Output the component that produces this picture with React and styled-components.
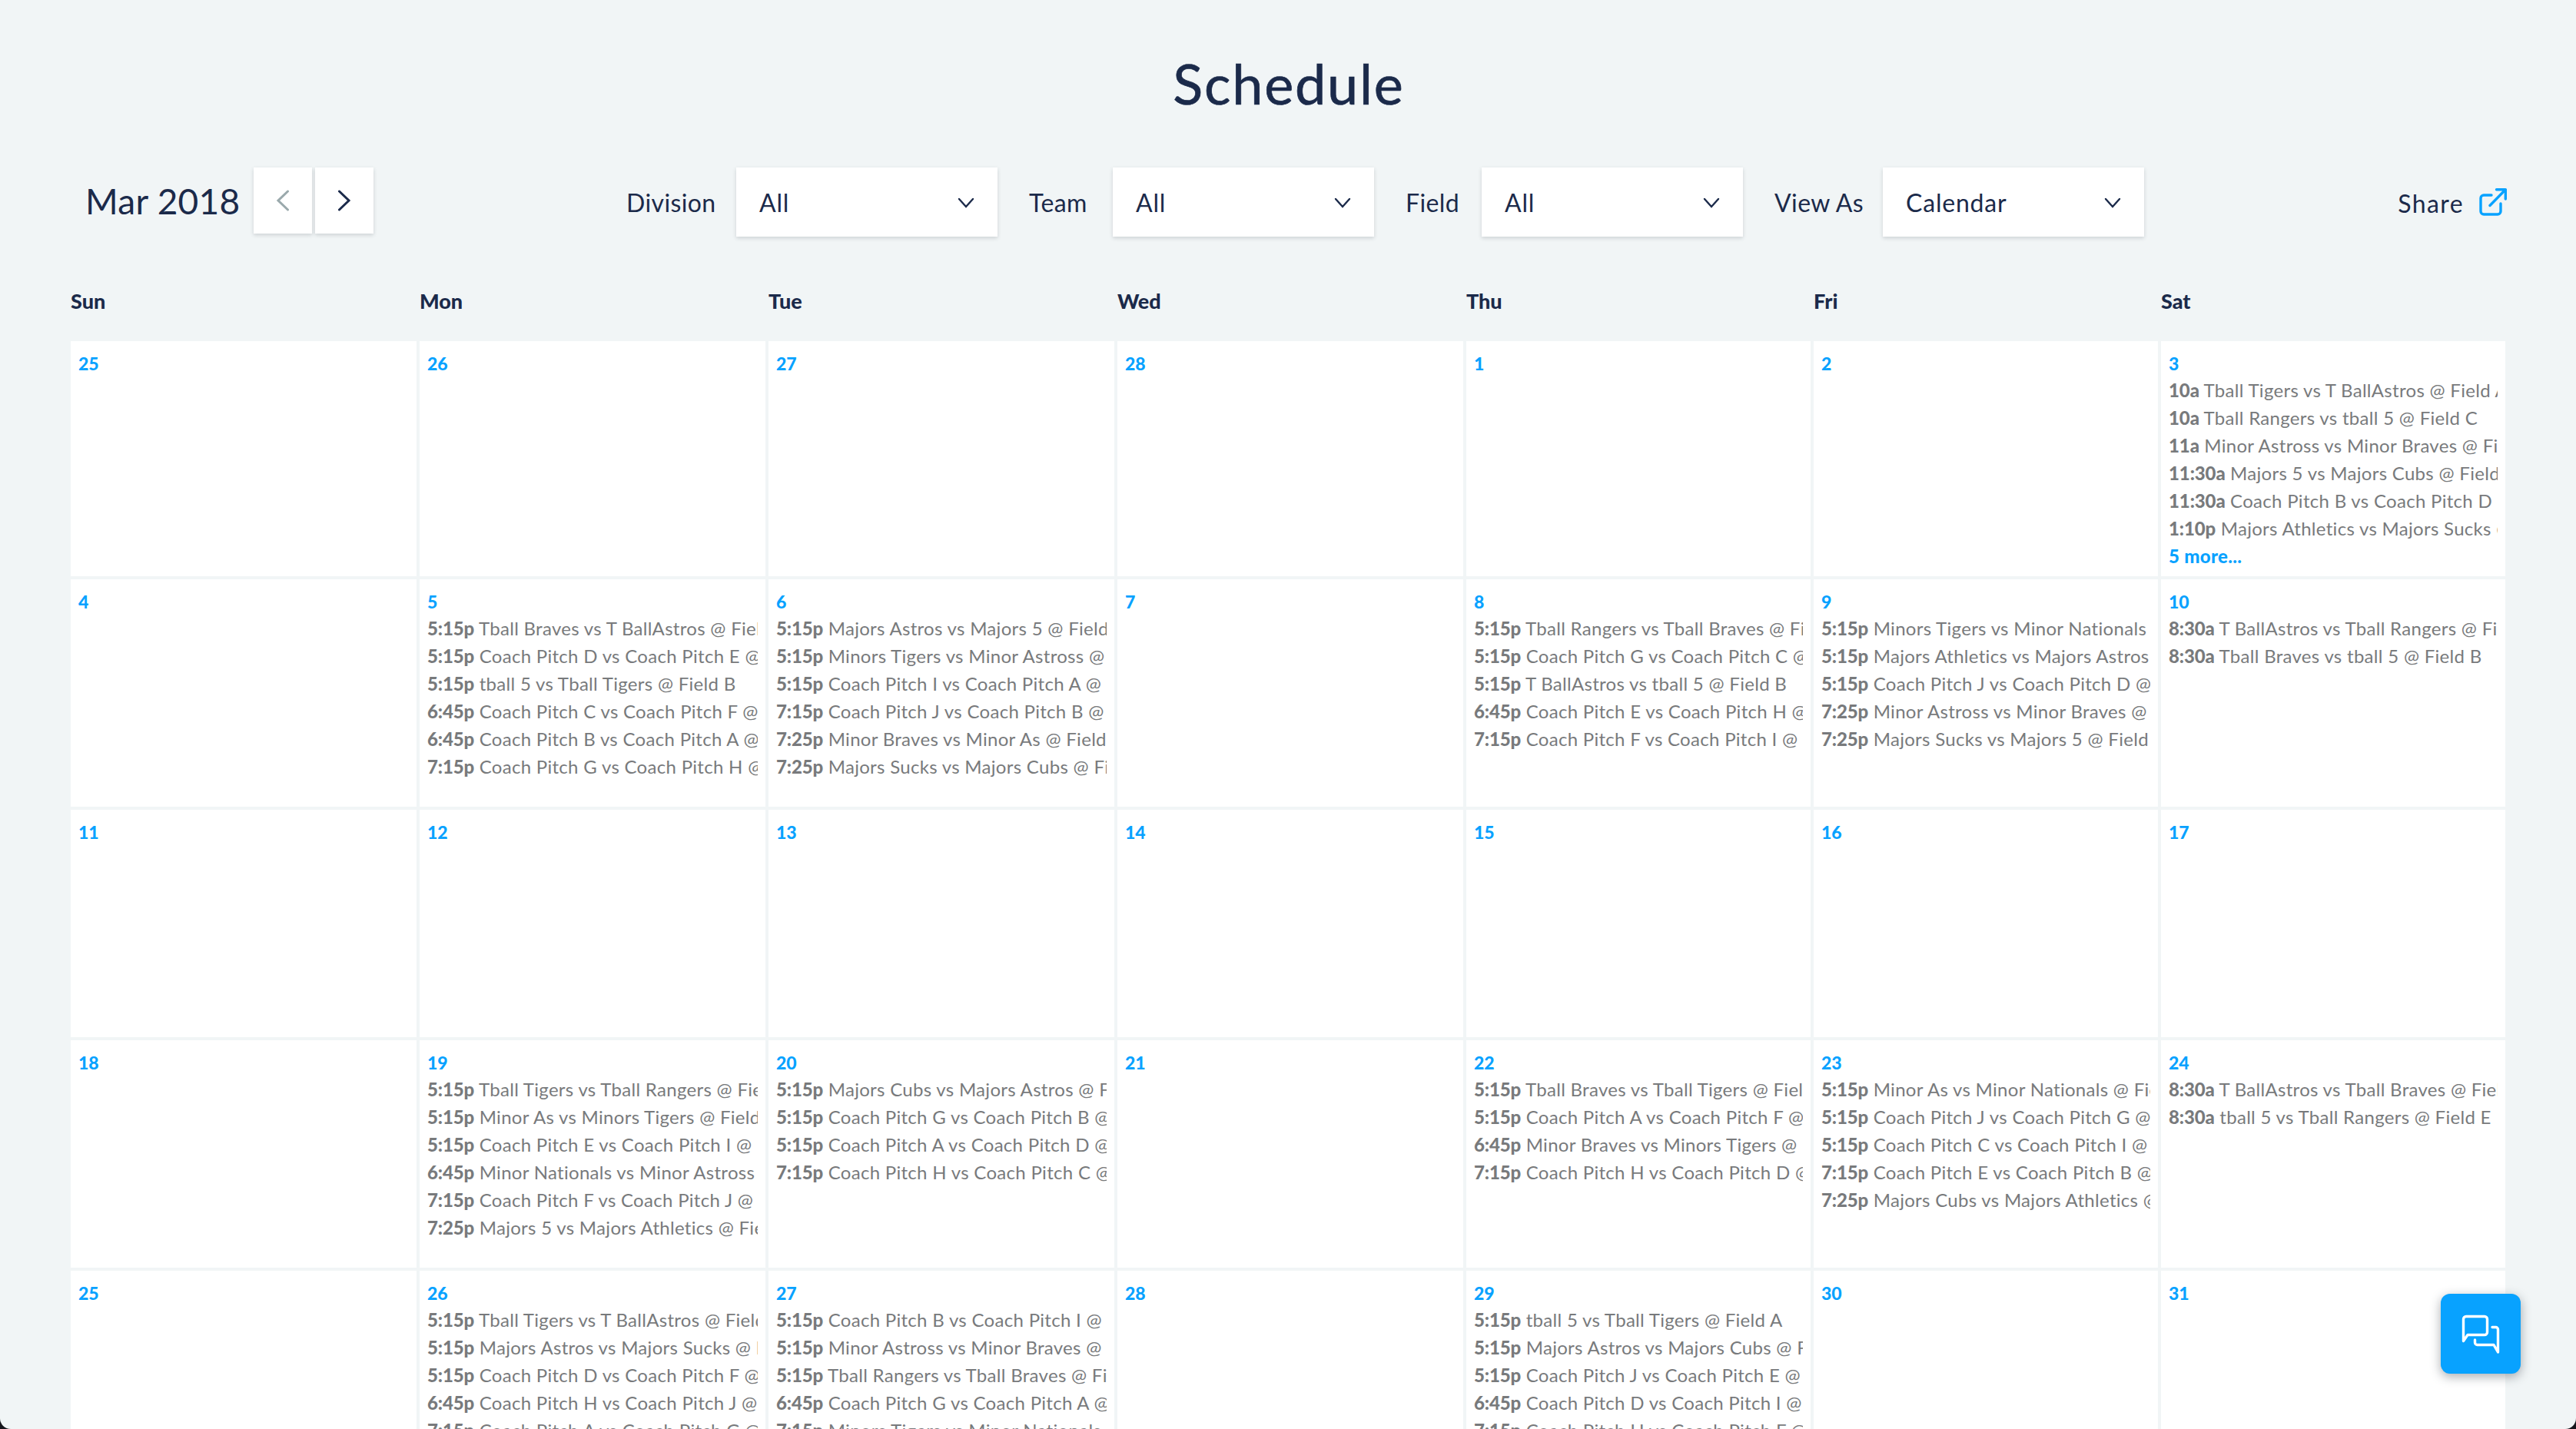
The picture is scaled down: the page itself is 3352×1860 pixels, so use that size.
import React from 'react'
import styled, { createGlobalStyle } from 'styled-components'

const navy = '#1b2a4a'
const blue = '#08a2ff'
const FONT = `Lato, "Open Sans", sans-serif`

const GlobalStyle = createGlobalStyle`
  html, body {
    margin: 0;
    background: #16161c;
  }
  * {
    box-sizing: border-box;
  }
`

const Page = styled.div`
  position: relative;
  height: 1860px;
  overflow: hidden;
  padding: 0 90px 0 92px;
  background: #f1f5f6;
  border-radius: 0 0 14px 14px;
  font-family: ${FONT};
  color: ${navy};
`

const Title = styled.h1`
  margin: 0;
  height: 218px;
  line-height: 217px;
  text-align: center;
  font-size: 72px;
  font-weight: 400;
  letter-spacing: 1.8px;
  -webkit-text-stroke: 0.7px ${navy};
`

const Toolbar = styled.div`
  display: flex;
  align-items: center;
  height: 90px;
`

const Month = styled.div`
  margin-left: 19px;
  margin-bottom: 3px;
  width: 198px;
  font-size: 46px;
  letter-spacing: 0.3px;
  white-space: nowrap;
`

const NavGroup = styled.div`
  display: flex;
  gap: 4px;
  align-self: flex-start;
  margin-left: 21px;
`

const NavButton = styled.button`
  display: flex;
  align-items: center;
  justify-content: center;
  width: 76px;
  height: 86px;
  padding: 0;
  border: 0;
  background: #fff;
  box-shadow: 0 2px 5px rgba(40, 50, 60, 0.18);
`

const Filters = styled.div`
  display: flex;
  align-items: center;
  margin-left: 329px;
`

const FilterLabel = styled.span`
  width: ${props => props.$width}px;
  margin-right: 31px;
  font-size: 32px;
  letter-spacing: 0.4px;
  white-space: nowrap;
`

const Select = styled.div`
  display: flex;
  align-items: center;
  justify-content: space-between;
  width: 340px;
  height: 90px;
  margin-right: 41px;
  padding: 1px 30px 0;
  background: #fff;
  box-shadow: 0 2px 5px rgba(40, 50, 60, 0.18);
  font-size: 32px;
  letter-spacing: 0.8px;
`

const Share = styled.a`
  display: flex;
  align-items: center;
  gap: 20px;
  margin-left: auto;
  font-size: 32px;
  letter-spacing: 1.4px;

  span {
    padding-top: 3px;
  }
`

const WeekHeader = styled.div`
  display: grid;
  grid-template-columns: 450px 450px 450px 450px 448px 448px 448px;
  column-gap: 4px;
  height: 136px;
  padding-top: 66px;
`

const WeekDay = styled.div`
  font-size: 27px;
  line-height: 36px;
  font-weight: 900;
`

const Calendar = styled.div`
  display: grid;
  grid-template-columns: 450px 450px 450px 450px 448px 448px 448px;
  grid-template-rows: 306px 296px 296px 296px 296px;
  gap: 4px;
`

const Cell = styled.div`
  min-width: 0;
  padding: 11px 10px 0;
  background: #fff;
  overflow: hidden;
`

const DayNumber = styled.div`
  height: 35px;
  font-size: 23px;
  line-height: 36px;
  font-weight: 900;
  color: ${blue};
`

const Event = styled.div`
  height: 36px;
  font-size: 24px;
  line-height: 36px;
  letter-spacing: 0.3px;
  white-space: nowrap;
  overflow: hidden;
  color: #787a7c;

  b {
    font-weight: 900;
    letter-spacing: -0.1px;
  }
`

const More = styled.div`
  font-size: 24px;
  line-height: 36px;
  letter-spacing: 0.3px;
  font-weight: 900;
  color: ${blue};
`

const ChatButton = styled.button`
  position: absolute;
  left: 3176px;
  top: 1684px;
  width: 104px;
  height: 104px;
  padding: 0;
  border: 0;
  border-radius: 12px;
  background: ${blue};
  box-shadow: 0 4px 14px rgba(40, 50, 60, 0.4);
`

const Chevron = ({ dir = 'right', color = navy }) => (
  <svg width="18" height="30" viewBox="0 0 18 30" fill="none">
    <path
      d={dir === 'right' ? 'M2.5 3 L15 15 L2.5 27' : 'M15.5 3 L3 15 L15.5 27'}
      stroke={color}
      strokeWidth="3"
      strokeLinecap="round"
      strokeLinejoin="miter"
    />
  </svg>
)

const CaretDown = () => (
  <svg width="22" height="14" viewBox="0 0 22 14" fill="none">
    <path d="M2 2 L11 12 L20 2" stroke={navy} strokeWidth="2.4" strokeLinecap="round" />
  </svg>
)

const ShareIcon = () => (
  <svg width="36" height="36" viewBox="0 0 36 36" fill="none" stroke={blue} strokeWidth="3.4" strokeLinecap="round" strokeLinejoin="round">
    <path d="M16 9 H6 a4 4 0 0 0 -4 4 V30 a4 4 0 0 0 4 4 H24 a4 4 0 0 0 4 -4 V20" />
    <path d="M14 22.5 L34.3 1.8 M22.5 1.8 H34.3 V14" />
  </svg>
)

const ChatIcon = () => (
  <svg width="104" height="104" viewBox="0 0 104 104" fill="none" stroke="#fff" strokeWidth="3.4" strokeLinecap="round" strokeLinejoin="round">
    <path d="M29.5 61.5 V33 a3.5 3.5 0 0 1 3.5 -3.5 H57 a3.5 3.5 0 0 1 3.5 3.5 V50 a3.5 3.5 0 0 1 -3.5 3.5 H35 Z" />
    <path d="M67 43.5 H71.5 a3 3 0 0 1 3 3 V76 L69 66.5 H47.5 a3 3 0 0 1 -3 -3 V60" />
  </svg>
)

const weekDays = ['Sun', 'Mon', 'Tue', 'Wed', 'Thu', 'Fri', 'Sat']

const filters = [
  { label: 'Division', width: 112, value: 'All' },
  { label: 'Team', width: 78, value: 'All' },
  { label: 'Field', width: 68, value: 'All' },
  { label: 'View As', width: 110, value: 'Calendar' },
]

const days = [
  { n: 25 },
  { n: 26 },
  { n: 27 },
  { n: 28 },
  { n: 1 },
  { n: 2 },
  {
    n: 3,
    more: '5 more...',
    events: [
      '10a Tball Tigers vs T BallAstros @ Field A',
      '10a Tball Rangers vs tball 5 @ Field C',
      '11a Minor Astross vs Minor Braves @ Field A',
      '11:30a Majors 5 vs Majors Cubs @ Field B',
      '11:30a Coach Pitch B vs Coach Pitch D @ Field E',
      '1:10p Majors Athletics vs Majors Sucks @ Field B',
    ],
  },
  { n: 4 },
  {
    n: 5,
    events: [
      '5:15p Tball Braves vs T BallAstros @ Field A',
      '5:15p Coach Pitch D vs Coach Pitch E @ Field C',
      '5:15p tball 5 vs Tball Tigers @ Field B',
      '6:45p Coach Pitch C vs Coach Pitch F @ Field C',
      '6:45p Coach Pitch B vs Coach Pitch A @ Field D',
      '7:15p Coach Pitch G vs Coach Pitch H @ Field C',
    ],
  },
  {
    n: 6,
    events: [
      '5:15p Majors Astros vs Majors 5 @ Field A',
      '5:15p Minors Tigers vs Minor Astross @ Field B',
      '5:15p Coach Pitch I vs Coach Pitch A @ Field C',
      '7:15p Coach Pitch J vs Coach Pitch B @ Field C',
      '7:25p Minor Braves vs Minor As @ Field B',
      '7:25p Majors Sucks vs Majors Cubs @ Field A',
    ],
  },
  { n: 7 },
  {
    n: 8,
    events: [
      '5:15p Tball Rangers vs Tball Braves @ Field A',
      '5:15p Coach Pitch G vs Coach Pitch C @ Field C',
      '5:15p T BallAstros vs tball 5 @ Field B',
      '6:45p Coach Pitch E vs Coach Pitch H @ Field C',
      '7:15p Coach Pitch F vs Coach Pitch I @ Field C',
    ],
  },
  {
    n: 9,
    events: [
      '5:15p Minors Tigers vs Minor Nationals @ Field B',
      '5:15p Majors Athletics vs Majors Astros @ Field A',
      '5:15p Coach Pitch J vs Coach Pitch D @ Field C',
      '7:25p Minor Astross vs Minor Braves @ Field B',
      '7:25p Majors Sucks vs Majors 5 @ Field A',
    ],
  },
  {
    n: 10,
    events: [
      '8:30a T BallAstros vs Tball Rangers @ Field A',
      '8:30a Tball Braves vs tball 5 @ Field B',
    ],
  },
  { n: 11 },
  { n: 12 },
  { n: 13 },
  { n: 14 },
  { n: 15 },
  { n: 16 },
  { n: 17 },
  { n: 18 },
  {
    n: 19,
    events: [
      '5:15p Tball Tigers vs Tball Rangers @ Field A',
      '5:15p Minor As vs Minors Tigers @ Field B',
      '5:15p Coach Pitch E vs Coach Pitch I @ Field C',
      '6:45p Minor Nationals vs Minor Astross @ Field B',
      '7:15p Coach Pitch F vs Coach Pitch J @ Field C',
      '7:25p Majors 5 vs Majors Athletics @ Field A',
    ],
  },
  {
    n: 20,
    events: [
      '5:15p Majors Cubs vs Majors Astros @ Field A',
      '5:15p Coach Pitch G vs Coach Pitch B @ Field C',
      '5:15p Coach Pitch A vs Coach Pitch D @ Field C',
      '7:15p Coach Pitch H vs Coach Pitch C @ Field C',
    ],
  },
  { n: 21 },
  {
    n: 22,
    events: [
      '5:15p Tball Braves vs Tball Tigers @ Field A',
      '5:15p Coach Pitch A vs Coach Pitch F @ Field C',
      '6:45p Minor Braves vs Minors Tigers @ Field B',
      '7:15p Coach Pitch H vs Coach Pitch D @ Field C',
    ],
  },
  {
    n: 23,
    events: [
      '5:15p Minor As vs Minor Nationals @ Field B',
      '5:15p Coach Pitch J vs Coach Pitch G @ Field C',
      '5:15p Coach Pitch C vs Coach Pitch I @ Field C',
      '7:15p Coach Pitch E vs Coach Pitch B @ Field C',
      '7:25p Majors Cubs vs Majors Athletics @ Field A',
    ],
  },
  {
    n: 24,
    events: [
      '8:30a T BallAstros vs Tball Braves @ Field A',
      '8:30a tball 5 vs Tball Rangers @ Field E',
    ],
  },
  { n: 25 },
  {
    n: 26,
    events: [
      '5:15p Tball Tigers vs T BallAstros @ Field A',
      '5:15p Majors Astros vs Majors Sucks @ Field A',
      '5:15p Coach Pitch D vs Coach Pitch F @ Field C',
      '6:45p Coach Pitch H vs Coach Pitch J @ Field C',
      '7:15p Coach Pitch A vs Coach Pitch G @ Field C',
    ],
  },
  {
    n: 27,
    events: [
      '5:15p Coach Pitch B vs Coach Pitch I @ Field C',
      '5:15p Minor Astross vs Minor Braves @ Field B',
      '5:15p Tball Rangers vs Tball Braves @ Field A',
      '6:45p Coach Pitch G vs Coach Pitch A @ Field C',
      '7:15p Minors Tigers vs Minor Nationals @ Field B',
    ],
  },
  { n: 28 },
  {
    n: 29,
    events: [
      '5:15p tball 5 vs Tball Tigers @ Field A',
      '5:15p Majors Astros vs Majors Cubs @ Field B',
      '5:15p Coach Pitch J vs Coach Pitch E @ Field C',
      '6:45p Coach Pitch D vs Coach Pitch I @ Field C',
      '7:15p Coach Pitch H vs Coach Pitch F @ Field C',
    ],
  },
  { n: 30 },
  { n: 31 },
]

const GameLine = ({ text }) => {
  const space = text.indexOf(' ')
  return (
    <Event>
      <b>{text.slice(0, space)}</b>
      {text.slice(space)}
    </Event>
  )
}

export default function App() {
  return (
    <Page>
      <GlobalStyle />
      <Title>Schedule</Title>
      <Toolbar>
        <Month>Mar 2018</Month>
        <NavGroup>
          <NavButton>
            <Chevron dir="left" color="#9aa9ac" />
          </NavButton>
          <NavButton>
            <Chevron />
          </NavButton>
        </NavGroup>
        <Filters>
          {filters.map(filter => (
            <React.Fragment key={filter.label}>
              <FilterLabel $width={filter.width}>{filter.label}</FilterLabel>
              <Select>
                {filter.value}
                <CaretDown />
              </Select>
            </React.Fragment>
          ))}
        </Filters>
        <Share>
          <span>Share</span>
          <ShareIcon />
        </Share>
      </Toolbar>
      <WeekHeader>
        {weekDays.map(day => (
          <WeekDay key={day}>{day}</WeekDay>
        ))}
      </WeekHeader>
      <Calendar>
        {days.map((day, i) => (
          <Cell key={i}>
            <DayNumber>{day.n}</DayNumber>
            {(day.events || []).map(text => (
              <GameLine key={text} text={text} />
            ))}
            {day.more && <More>{day.more}</More>}
          </Cell>
        ))}
      </Calendar>
      <ChatButton>
        <ChatIcon />
      </ChatButton>
    </Page>
  )
}
